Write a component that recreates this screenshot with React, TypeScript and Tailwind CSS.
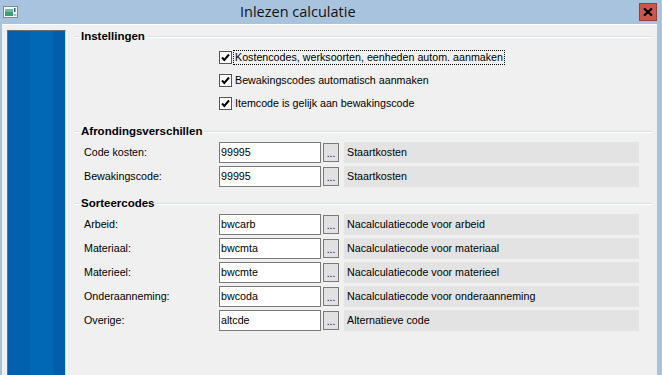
import React from 'react';

const font = { fontFamily: '"Liberation Sans", Arial, sans-serif' };

const checks = [
  { label: 'Kostencodes, werksoorten, eenheden autom. aanmaken', focus: true },
  { label: 'Bewakingscodes automatisch aanmaken', focus: false },
  { label: 'Itemcode is gelijk aan bewakingscode', focus: false },
];

const afronding = [
  { label: 'Code kosten:', value: '99995', desc: 'Staartkosten' },
  { label: 'Bewakingscode:', value: '99995', desc: 'Staartkosten' },
];

const sorteer = [
  { label: 'Arbeid:', value: 'bwcarb', desc: 'Nacalculatiecode voor arbeid' },
  { label: 'Materiaal:', value: 'bwcmta', desc: 'Nacalculatiecode voor materiaal' },
  { label: 'Materieel:', value: 'bwcmte', desc: 'Nacalculatiecode voor materieel' },
  { label: 'Onderaanneming:', value: 'bwcoda', desc: 'Nacalculatiecode voor onderaanneming' },
  { label: 'Overige:', value: 'altcde', desc: 'Alternatieve code' },
];

const SectionHeader: React.FC<{ title: string; className?: string }> = ({ title, className }) => (
  <div className={`flex items-center h-[14px] ${className ?? ''}`}>
    <div className="w-[4px] h-[2px] border-t border-[#d5dfe5] border-b border-b-white" />
    <span className="px-[2px] text-[11.5px] font-bold text-black leading-none">{title}</span>
    <div className="flex-1 h-[2px] border-t border-[#d5dfe5] border-b border-b-white" />
  </div>
);

const CheckMark = () => (
  <svg width="11" height="11" viewBox="0 0 11 11">
    <path d="M2 5.5 L4.3 8 L9 2.5" fill="none" stroke="#000" strokeWidth="2" />
  </svg>
);

const FieldRow: React.FC<{ label: string; value: string; desc: string }> = ({ label, value, desc }) => (
  <div className="flex items-center h-[21px]">
    <div className="w-[144px] pl-[9px] text-[10.7px] text-black">{label}</div>
    <div className="w-[102px] h-[21px] bg-white border border-[#7a7a7a] flex items-center pl-[1px] text-[10.7px] text-black">
      {value}
    </div>
    <div className="ml-[2px] w-[16px] h-[19px] bg-[#e1e1e1] border border-[#7a7a7a] flex items-end justify-center pb-[2px] text-[10px] leading-none text-black">
      ...
    </div>
    <div className="ml-[5px] w-[295px] h-[21px] bg-[#e3e3e3] flex items-center pl-[3px] text-[10.7px] text-black">
      {desc}
    </div>
  </div>
);

export default function App() {
  return (
    <div className="w-[662px] h-[375px] bg-[#a8c3dd] flex flex-col overflow-hidden" style={font}>
      {/* Title bar */}
      <div className="h-[24px] flex items-center shrink-0">
        <svg className="ml-[3px]" width="15" height="12" viewBox="0 0 15 12">
          <rect x="0.5" y="0.5" width="14" height="11" fill="#f4f4f4" stroke="#7f8a94" />
          <rect x="2" y="3" width="8" height="7" fill="#3f9a7c" />
          <rect x="2" y="3" width="8" height="3" fill="#6bbca0" />
          <rect x="11" y="2" width="1.5" height="4" fill="#2f5f7f" />
          <rect x="10.5" y="8" width="3" height="2" fill="#b8b8b8" />
        </svg>
        <div className="flex-1 pl-[222px] text-[14.5px] text-[#111]" style={{ fontFamily: '"Open Sans", "Noto Sans", sans-serif' }}>
          Inlezen calculatie
        </div>
        <div className="mr-[5px] w-[18px] h-[18px] bg-[#c9574b] border border-[#9c3b31] flex items-center justify-center">
          <svg width="10" height="8" viewBox="0 0 10 8">
            <path d="M1 0.5 L9 7.5 M9 0.5 L1 7.5" stroke="#000" strokeWidth="2.2" />
          </svg>
        </div>
      </div>

      {/* Window body */}
      <div className="flex-1 ml-[2px] mr-[5px] bg-[#f0f0f0] border-t border-white flex">
        {/* Blue side panel */}
        <div className="ml-[5px] mt-[5px] w-[59px] border-t border-l border-[#6e6e6e] border-r border-r-[#dcdcdc] bg-[linear-gradient(90deg,#005fac_0%,#0062af_38%,#0069b5_40%,#0068b4_78%,#005fac_80%,#005dab_100%)]" />

        {/* Content */}
        <div className="ml-[9px] w-[577px] pt-[5px] flex flex-col">
          <SectionHeader title="Instellingen" />
          <div className="mt-[2px] flex flex-col">
            {checks.map((c) => (
              <div key={c.label} className="h-[23px] flex items-center pl-[144px]">
                <div className="w-[13px] h-[13px] bg-white border border-[#555] flex items-center justify-center">
                  <CheckMark />
                </div>
                <span
                  className={`ml-[2px] px-[1px] text-[10.7px] text-black leading-[13px] ${
                    c.focus ? 'outline outline-1 outline-dotted outline-black' : ''
                  }`}
                >
                  {c.label}
                </span>
              </div>
            ))}
          </div>

          <SectionHeader title="Afrondingsverschillen" className="mt-[10px]" />
          <div className="mt-[3px] flex flex-col gap-[3px]">
            {afronding.map((r) => (
              <FieldRow key={r.label} {...r} />
            ))}
          </div>

          <SectionHeader title="Sorteercodes" className="mt-[10px]" />
          <div className="mt-[3px] flex flex-col gap-[3px]">
            {sorteer.map((r) => (
              <FieldRow key={r.label} {...r} />
            ))}
          </div>
        </div>
      </div>
    </div>
  );
}
